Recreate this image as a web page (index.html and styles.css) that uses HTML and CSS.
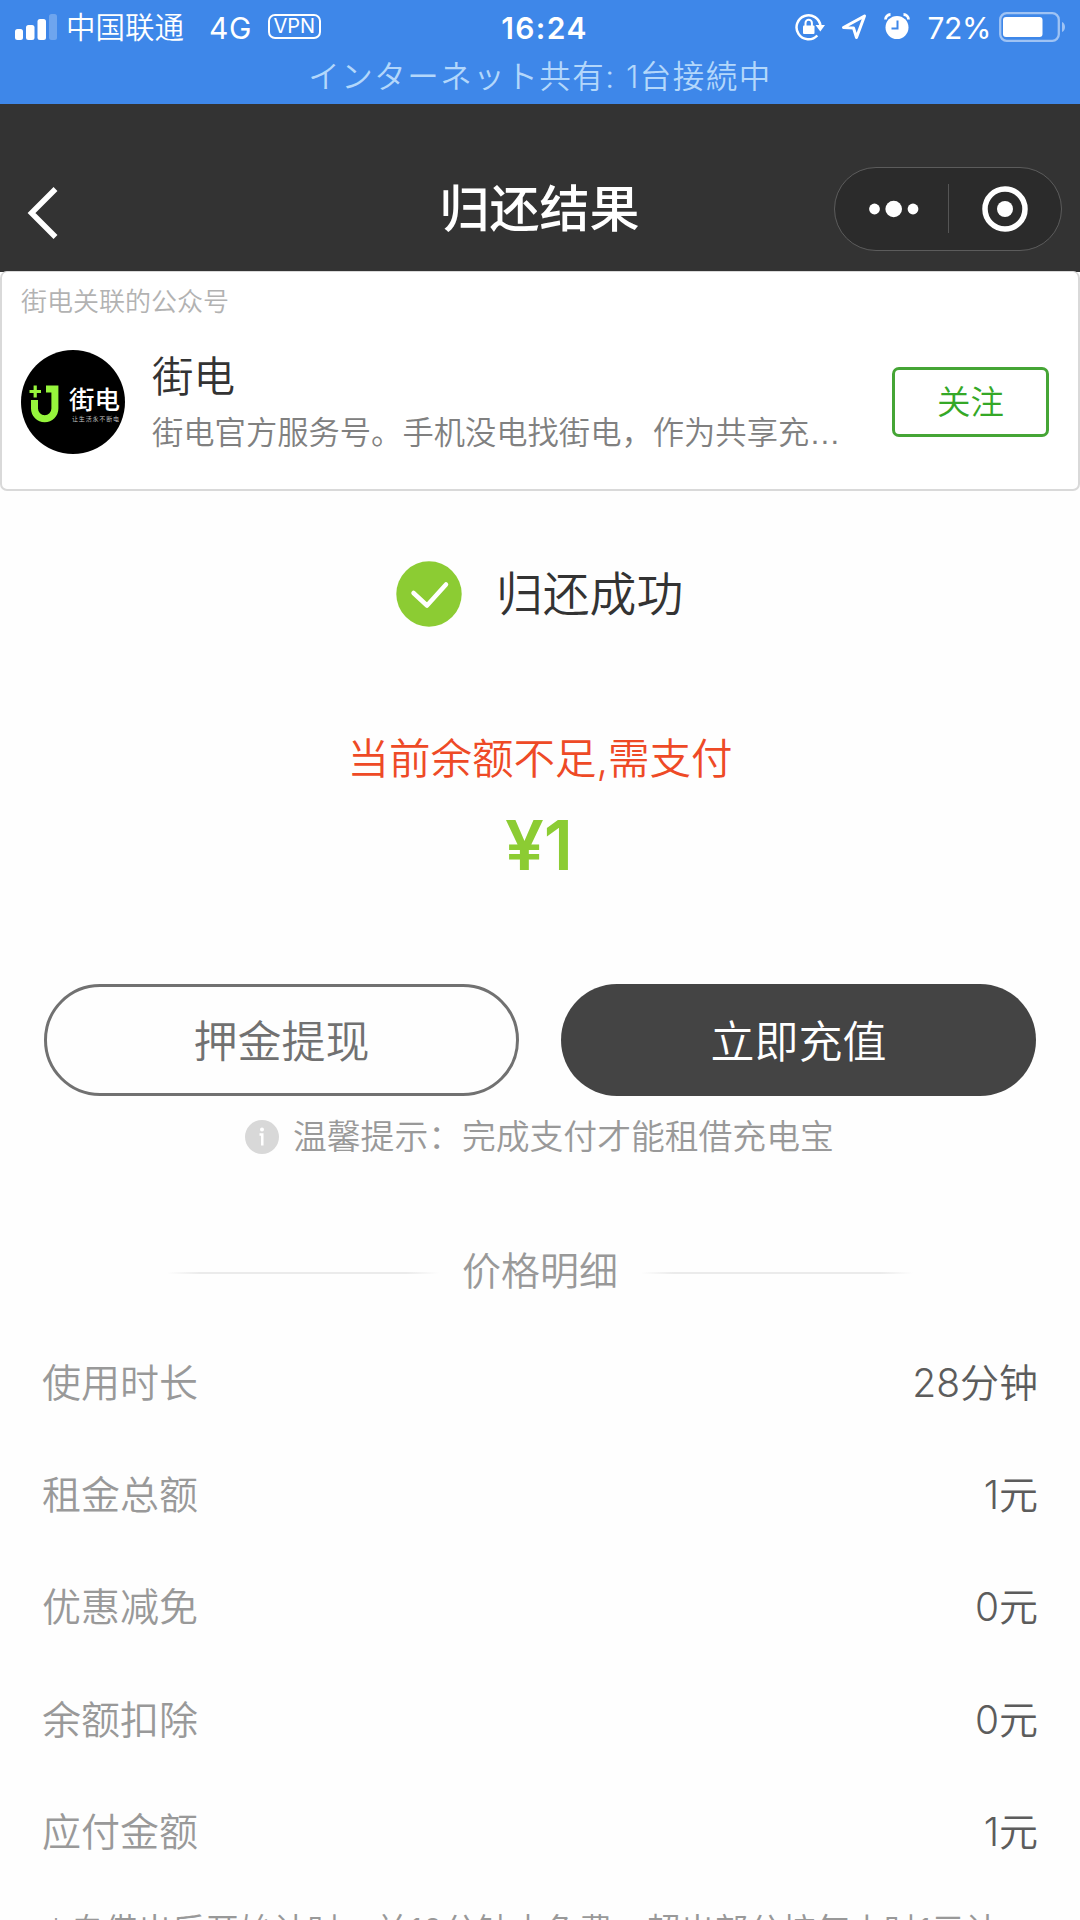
FILE: index.html
```html
<!DOCTYPE html>
<html lang="zh-CN">
<head>
<meta charset="utf-8">
<title>归还结果</title>
<link rel="stylesheet" href="styles.css">
</head>
<body>
<div class="screen">
  <div class="status">
    <div class="status-row">
      <div class="status-left">
        <svg class="signal" width="42" height="28" viewBox="0 0 42 28">
          <rect x="0" y="15" width="8" height="11" rx="2.5"/>
          <rect x="11" y="11" width="8.500" height="15" rx="2.500"/>
          <rect x="22.500" y="5" width="8.500" height="21" rx="2.500"/>
          <rect x="34" y="0" width="8" height="26" rx="2.500" opacity=".25"/>
        </svg>
        <span class="carrier">中国联通</span>
        <span class="network">4G</span>
        <span class="vpn">VPN</span>
      </div>
      <div class="clock">16:24</div>
      <div class="status-right">
        <svg class="i-lock" width="30" height="28" viewBox="0 0 30 28" fill="none" stroke="#fff">
          <path d="M22.300 22.500A12 12 0 1 1 25.500 13" stroke-width="2.500"/>
          <path d="M20.500 12h9.500l-4.700 6.500z" fill="#fff" stroke="none"/>
          <rect x="8" y="12.500" width="11.500" height="8.500" rx="1" fill="#fff" stroke="none"/>
          <path d="M10.500 13v-3a3.200 3.200 0 0 1 6.400 0v3" stroke-width="2"/>
        </svg>
        <svg class="i-arrow" width="26" height="26" viewBox="0 0 26 26" fill="none" stroke="#fff" stroke-width="3" stroke-linejoin="round">
          <path d="M23.500 2L2.500 13.500l10 .5 3 9.500z"/>
        </svg>
        <svg class="i-alarm" width="26" height="27" viewBox="0 0 26 27">
          <circle cx="13" cy="14.500" r="11.500" fill="#fff"/>
          <path d="M1.500 6.500a5 5 0 0 1 5-5M24.500 6.500a5 5 0 0 0-5-5" fill="none" stroke="#fff" stroke-width="2.800"/>
          <path d="M13.500 7.500v8H7.500" fill="none" stroke="#3e87e9" stroke-width="2"/>
        </svg>
        <span class="percent">72%</span>
        <svg class="battery" width="67" height="30" viewBox="0 0 67 30">
          <rect x="1.200" y="1.200" width="58.600" height="27.600" rx="6.500" fill="none" stroke="#fff" stroke-opacity=".5" stroke-width="2.300"/>
          <rect x="4" y="5" width="39.500" height="20" rx="3" fill="#fff"/>
          <path d="M63 10c4 1.500 4 8.500 0 10z" fill="#fff" fill-opacity=".5"/>
        </svg>
      </div>
    </div>
    <div class="hotspot">インターネット共有: 1台接続中</div>
  </div>

  <header class="nav">
    <svg class="back" width="32" height="54" viewBox="0 0 32 54" fill="none" stroke="#fff" stroke-width="5.500">
      <path d="M28.500 3L4.500 27l24 24"/>
    </svg>
    <h1 class="title">归还结果</h1>
    <div class="capsule">
      <svg class="more" width="50" height="20" viewBox="0 0 50 20" fill="#fff">
        <circle cx="5.500" cy="10" r="5.400"/><circle cx="24.700" cy="10" r="8.300"/><circle cx="44" cy="10" r="5.400"/>
      </svg>
      <span class="capsule-line"></span>
      <svg class="target" width="46" height="46" viewBox="0 0 46 46">
        <circle cx="23" cy="23" r="20" fill="none" stroke="#fff" stroke-width="5.500"/><circle cx="23" cy="23" r="8" fill="#fff"/>
      </svg>
    </div>
  </header>

  <section class="account">
    <p class="account-label">街电关联的公众号</p>
    <div class="account-row">
      <svg class="avatar" width="104" height="104" viewBox="0 0 104 104">
        <circle cx="52" cy="52" r="52" fill="#000"/>
        <g fill="none" stroke="#96f53c">
          <path d="M8.500 41.500h11.500M14.200 35.500v12" stroke-width="3.200"/>
          <path d="M13.500 50v8.500a10.200 10.200 0 0 0 20.400 0V39H25" stroke-width="7"/>
        </g>
        <text class="logo-name" x="48" y="59" textLength="51">街电</text>
        <text class="logo-sub" x="51" y="71" textLength="47">让生活永不断电</text>
      </svg>
      <div class="account-text">
        <div class="account-name">街电</div>
        <div class="account-desc">街电官方服务号。手机没电找街电，作为共享充<span class="dots">…</span></div>
      </div>
      <div class="follow">关注</div>
    </div>
  </section>

  <section class="result">
    <svg width="66" height="66" viewBox="0 0 66 66">
      <circle cx="33" cy="33" r="32.700" fill="#8ccc33"/>
      <path d="M17.500 32L31 44.500 50 23.500" fill="none" stroke="#fff" stroke-width="4.500" stroke-linecap="round" stroke-linejoin="round"/>
    </svg>
    <span>归还成功</span>
  </section>

  <p class="warning">当前余额不足,需支付</p>
  <p class="amount">¥1</p>

  <div class="actions">
    <div class="btn btn-outline">押金提现</div>
    <div class="btn btn-solid">立即充值</div>
  </div>

  <div class="hint">
    <svg width="34" height="34" viewBox="0 0 34 34">
      <circle cx="17" cy="17" r="17" fill="#d8d8d8"/>
      <circle cx="17" cy="9.500" r="2" fill="#fff"/>
      <path d="M14.500 14.500h2.800v11" fill="none" stroke="#fff" stroke-width="2.500"/>
    </svg>
    <span>温馨提示：完成支付才能租借充电宝</span>
  </div>

  <div class="divider">
    <span class="rule"></span>
    <span>价格明细</span>
    <span class="rule"></span>
  </div>

  <dl class="prices">
    <div class="price"><dt>使用时长</dt><dd>28分钟</dd></div>
    <div class="price"><dt>租金总额</dt><dd>1元</dd></div>
    <div class="price"><dt>优惠减免</dt><dd>0元</dd></div>
    <div class="price"><dt>余额扣除</dt><dd>0元</dd></div>
    <div class="price"><dt>应付金额</dt><dd>1元</dd></div>
  </dl>

  <p class="note"><span class="star">*</span>自借出后开始计时，前10分钟内免费，超出部分按每小时1元计</p>
</div>
</body>
</html>
```
FILE: styles.css
```css
* { box-sizing: border-box; margin: 0; padding: 0; }

body {
  background: #fefefe;
  font-family: Inter, "Noto Sans CJK SC", sans-serif;
  font-weight: 350;
  color: #333;
}

svg { display: block; flex: none; }

.screen {
  display: flex;
  flex-direction: column;
  width: 1080px;
  height: 1920px;
  overflow: hidden;
  white-space: nowrap;
}
.screen > * { flex: none; }

/* status bar */
.status { height: 104px; background: #3e87e9; color: #fff; padding-top: 8px; }
.status-row {
  display: grid;
  grid-template-columns: 1fr auto 1fr;
  align-items: center;
  height: 40px;
  font-weight: 400;
}
.status-left { display: flex; align-items: center; height: 40px; padding-left: 15px; }
.signal { fill: #fff; margin-top: -1px; }
.carrier { margin-left: 9px; font-size: 29.5px; line-height: 38px; margin-top: -2px; font-weight: 350; }
.network { margin-left: 25px; font-size: 30px; line-height: 40px; letter-spacing: .5px; margin-top: -1px; }
.vpn {
  margin-left: 16px;
  width: 53px;
  height: 25px;
  margin-top: -3px;
  border: 2px solid #fff;
  border-radius: 7px;
  font-size: 20px;
  line-height: 21px;
  text-align: center;
}
.clock { font-size: 30px; line-height: 40px; font-weight: 600; letter-spacing: 1.4px; margin-left: 9px; margin-top: -1px; }
.status-right { display: flex; align-items: center; justify-content: flex-end; height: 40px; padding-right: 14px; }
.i-lock { margin-right: 16px; margin-top: -3px; }
.i-arrow { margin-right: 17px; margin-top: -2px; }
.i-alarm { margin-right: 17px; margin-top: -3px; }
.percent { font-size: 30px; line-height: 40px; letter-spacing: -.4px; margin-right: 8px; margin-top: -1px; }
.battery { margin-top: -3px; }
.hotspot {
  padding-top: 9px;
  text-align: center;
  font-family: Inter, "Noto Sans CJK JP", sans-serif;
  font-size: 31.5px;
  line-height: 40px;
  letter-spacing: 1.5px;
  color: #b3d7fb;
}

/* navigation */
.nav {
  display: grid;
  grid-template-columns: 1fr auto 1fr;
  align-items: center;
  height: 168px;
  padding: 42px 18px 0 27px;
  background: #333;
  color: #fff;
}
.back { margin-top: 8px; }
.title { font-size: 50px; line-height: 84px; font-weight: 500; margin-left: -10px; }
.capsule {
  justify-self: end;
  display: flex;
  align-items: center;
  width: 228px;
  height: 84px;
  margin-top: -1px;
  padding-left: 34px;
  border: 1px solid #5c5c5c;
  border-radius: 42px;
  background: #2b2b2b;
}
.capsule-line { width: 1px; height: 49px; margin: 0 33px 0 29px; background: #555; }

/* official account card */
.account {
  height: 220px;
  margin-top: -1px;
  padding: 10px 29px 0 19px;
  border: 2px solid #d9d9d9;
  border-top-width: 1px;
  border-radius: 7px;
  background: #fff;
}
.account-label { font-size: 26px; line-height: 40px; color: #b2b2b2; }
.account-row { display: flex; align-items: center; margin-top: 28px; height: 104px; }
.logo-name { font-size: 25.5px; font-weight: 500; fill: #fff; }
.logo-sub { font-size: 6px; fill: #ccc; }
.account-text { margin: 6px 0 0 27px; }
.account-name { font-size: 41.5px; line-height: 56px; color: #333; }
.account-desc { font-size: 31.3px; line-height: 56px; color: #808080; }
.dots { font-family: "Liberation Sans", sans-serif; }
.follow {
  margin-left: auto;
  width: 157px;
  height: 70px;
  border: 3px solid #45a535;
  border-radius: 7px;
  font-size: 33.5px;
  line-height: 65px;
  text-align: center;
  color: #35a827;
}

/* result */
.result {
  display: flex;
  align-items: center;
  margin: 70px 0 0 396px;
  height: 66px;
  gap: 34px;
  font-size: 46.8px;
  line-height: 65px;
}
.warning { margin-top: 102px; text-align: center; font-size: 41.5px; line-height: 60px; color: #ee4a26; }
.amount {
  margin-top: 16px;
  margin-right: 2px;
  text-align: center;
  font-size: 69px;
  line-height: 80px;
  font-weight: 600;
  color: #8ccc33;
}

/* actions */
.actions { display: grid; grid-template-columns: 1fr 1fr; gap: 42px; margin: 99px 44px 0; }
.btn { height: 112px; border-radius: 56px; font-size: 44px; line-height: 117px; text-align: center; }
.btn-outline { border: 3px solid #717171; line-height: 111px; color: #717171; }
.btn-solid { background: #444; color: #fff; }
.hint {
  display: flex;
  align-items: center;
  height: 50px;
  margin: 16px 0 0 245px;
  gap: 14px;
  font-size: 33.8px;
  line-height: 50px;
  color: #999;
}

/* price breakdown */
.divider {
  display: flex;
  align-items: center;
  justify-content: center;
  height: 60px;
  margin-top: 79px;
  gap: 23px;
  font-size: 39px;
  line-height: 60px;
  color: #999;
}
.rule {
  width: 272px;
  height: 2px;
  margin-top: 4px;
  background: linear-gradient(90deg, transparent, #ebebeb 12%, #ebebeb 88%, transparent);
}
.prices { margin-top: 26px; padding: 0 42px; font-size: 39px; line-height: 112.2px; }
.price { display: flex; justify-content: space-between; }
.price dt { color: #999; }
.price dd { color: #5c5c5c; }
.note { margin: 19px 0 0 42px; font-size: 33.9px; line-height: 48px; color: #999; }
.star { display: inline-block; width: 28px; text-align: center; }
```
